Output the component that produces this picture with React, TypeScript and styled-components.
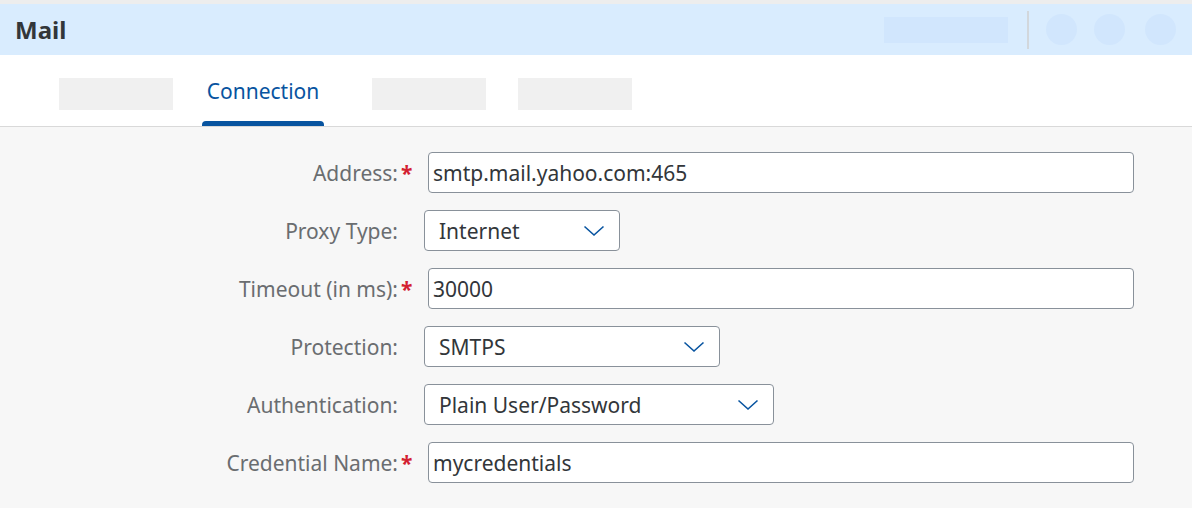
import React from 'react';
import styled, { createGlobalStyle } from 'styled-components';

const GlobalStyle = createGlobalStyle`
  html, body {
    margin: 0;
    padding: 0;
    background: #f7f7f7;
    font-family: "Noto Sans", "Open Sans", sans-serif;
  }
`;

const Page = styled.div`
  display: flex;
  flex-direction: column;
  width: 1192px;
  height: 508px;
  overflow: hidden;
  border-top: 4px solid #ededed;
  box-sizing: border-box;
`;

const Header = styled.div`
  display: flex;
  align-items: center;
  height: 51px;
  padding: 0 16px 0 15px;
  background: #d9ecfe;
`;

const Title = styled.h1`
  margin: 0;
  font-size: 24px;
  font-weight: 700;
  color: #32363a;
  flex: 1;
`;

const Ghost = styled.div`
  width: 124px;
  height: 26px;
  background: #d1e6fd;
`;

const Divider = styled.div`
  width: 2px;
  height: 38px;
  margin: 0 17px 0 19px;
  background: #d2d7dc;
`;

const Circle = styled.div<{ $gap?: number }>`
  width: 31px;
  height: 31px;
  border-radius: 50%;
  background: #d1e6fd;
  margin-left: ${(p) => p.$gap ?? 0}px;
`;

const TabBar = styled.div`
  display: flex;
  align-items: flex-start;
  height: 71px;
  padding-left: 59px;
  background: #ffffff;
  border-bottom: 1px solid #d9d9d9;
`;

const TabGhost = styled.div<{ $gap?: number }>`
  width: 114px;
  height: 32px;
  margin-top: 23px;
  background: #f0f0f0;
  margin-left: ${(p) => p.$gap ?? 0}px;
`;

const Tab = styled.div<{ $gap?: number }>`
  position: relative;
  display: flex;
  justify-content: center;
  align-self: stretch;
  width: 122px;
  padding-top: 22px;
  box-sizing: border-box;
  margin-left: ${(p) => p.$gap ?? 0}px;
  font-size: 21px;
  color: #0854a0;
  &::after {
    content: '';
    position: absolute;
    left: 0;
    right: 0;
    bottom: 0;
    height: 5px;
    border-radius: 4px 4px 0 0;
    background: #0854a0;
  }
`;

const Form = styled.div`
  display: grid;
  grid-template-columns: 412px 1fr;
  column-gap: 12px;
  row-gap: 17px;
  padding-top: 25px;
`;

const Label = styled.label`
  display: flex;
  justify-content: flex-end;
  align-items: center;
  height: 41px;
  font-size: 21px;
  color: #6a6d70;
`;

const Star = styled.span<{ $show: boolean }>`
  width: 14px;
  padding-left: 3px;
  box-sizing: border-box;
  color: #d32030;
  font-weight: 700;
  visibility: ${(p) => (p.$show ? 'visible' : 'hidden')};
`;

const Field = styled.div`
  display: flex;
  align-items: center;
  height: 41px;
`;

const TextBox = styled.div`
  display: flex;
  align-items: center;
  margin-left: 4px;
  width: 706px;
  height: 41px;
  box-sizing: border-box;
  padding-left: 4px;
  background: #ffffff;
  border: 1px solid #89919a;
  border-radius: 4px;
  font-size: 21px;
  color: #32363a;
`;

const Select = styled.div<{ $w: number }>`
  display: flex;
  align-items: center;
  justify-content: space-between;
  width: ${(p) => p.$w}px;
  height: 41px;
  box-sizing: border-box;
  padding: 0 14px 0 14px;
  background: #ffffff;
  border: 1px solid #89919a;
  border-radius: 4px;
  font-size: 21px;
  color: #32363a;
`;

const Chevron = () => (
  <svg width="22" height="12" viewBox="0 0 22 12">
    <polyline points="1.5,1.5 11,10 20.5,1.5" fill="none" stroke="#0854a0" strokeWidth="1.6" />
  </svg>
);

type Row =
  | { label: string; required: boolean; kind: 'text'; value: string }
  | { label: string; required: boolean; kind: 'select'; value: string; width: number };

const rows: Row[] = [
  { label: 'Address:', required: true, kind: 'text', value: 'smtp.mail.yahoo.com:465' },
  { label: 'Proxy Type:', required: false, kind: 'select', value: 'Internet', width: 196 },
  { label: 'Timeout (in ms):', required: true, kind: 'text', value: '30000' },
  { label: 'Protection:', required: false, kind: 'select', value: 'SMTPS', width: 296 },
  { label: 'Authentication:', required: false, kind: 'select', value: 'Plain User/Password', width: 350 },
  { label: 'Credential Name:', required: true, kind: 'text', value: 'mycredentials' },
];

export default function App() {
  return (
    <>
      <GlobalStyle />
      <Page>
        <Header>
          <Title>Mail</Title>
          <Ghost />
          <Divider />
          <Circle />
          <Circle $gap={17} />
          <Circle $gap={20} />
        </Header>
        <TabBar>
          <TabGhost />
          <Tab $gap={29}>Connection</Tab>
          <TabGhost $gap={48} />
          <TabGhost $gap={32} />
        </TabBar>
        <Form>
          {rows.map((r) => (
            <React.Fragment key={r.label}>
              <Label>
                {r.label}
                <Star $show={r.required}>*</Star>
              </Label>
              <Field>
                {r.kind === 'text' ? (
                  <TextBox>{r.value}</TextBox>
                ) : (
                  <Select $w={r.width}>
                    {r.value}
                    <Chevron />
                  </Select>
                )}
              </Field>
            </React.Fragment>
          ))}
        </Form>
      </Page>
    </>
  );
}
